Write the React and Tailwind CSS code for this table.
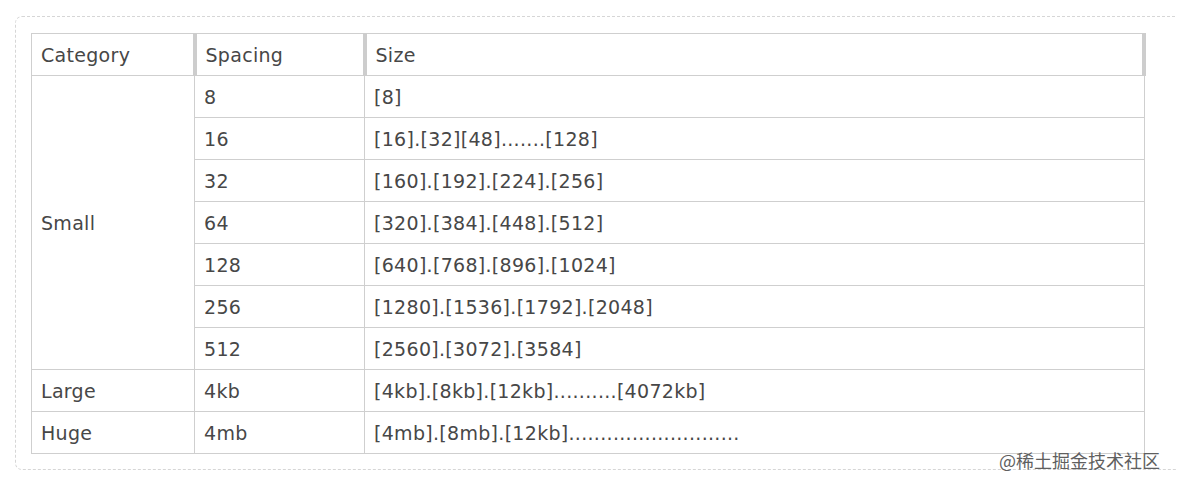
import React from "react";

const rows = [
  { spacing: "8", size: "[8]" },
  { spacing: "16", size: "[16].[32][48].......[128]" },
  { spacing: "32", size: "[160].[192].[224].[256]" },
  { spacing: "64", size: "[320].[384].[448].[512]" },
  { spacing: "128", size: "[640].[768].[896].[1024]" },
  { spacing: "256", size: "[1280].[1536].[1792].[2048]" },
  { spacing: "512", size: "[2560].[3072].[3584]" },
];

const td = "border border-[#cfcfcf] h-[42px] px-[9px] pt-[2px] align-middle";
const th = "border border-[#cfcfcf] border-r-4 border-r-[#cdcdcd] h-[42px] px-[9px] pt-[2px] text-left font-normal";

const App = () => {
  return (
    <div className="relative w-[1177px] h-[488px] overflow-hidden bg-white text-[19px] text-[#474747] font-['DejaVu_Sans',sans-serif]">
      <div className="mt-[16px] ml-[15px] w-[1180px] h-[454px] border border-dashed border-[#d6d6d6] rounded-[7px] pt-[16px] pl-[15px]">
        <table className="table-fixed border-collapse w-[1115px] tracking-[0.3px]">
          <colgroup>
            <col className="w-[163px]" />
            <col className="w-[170px]" />
            <col />
          </colgroup>
          <thead>
            <tr>
              <th className={th}>Category</th>
              <th className={th}>Spacing</th>
              <th className={th}>Size</th>
            </tr>
          </thead>
          <tbody>
            {rows.map((r, i) => (
              <tr key={r.spacing}>
                {i === 0 ? (
                  <td rowSpan={7} className={td}>Small</td>
                ) : null}
                <td className={td}>{r.spacing}</td>
                <td className={td}>{r.size}</td>
              </tr>
            ))}
            <tr>
              <td className={td}>Large</td>
              <td className={td}>4kb</td>
              <td className={td}>[4kb].[8kb].[12kb]..........[4072kb]</td>
            </tr>
            <tr>
              <td className={td}>Huge</td>
              <td className={td}>4mb</td>
              <td className={td}>[4mb].[8mb].[12kb]...........................</td>
            </tr>
          </tbody>
        </table>
      </div>
      {/* watermark */}
      <div className="absolute right-[17px] top-[448px] text-[18px] text-[#5f5f5f] font-['Noto_Sans_CJK_SC',sans-serif] leading-[24px]">
        @稀土掘金技术社区
      </div>
    </div>
  );
};

export default App;
